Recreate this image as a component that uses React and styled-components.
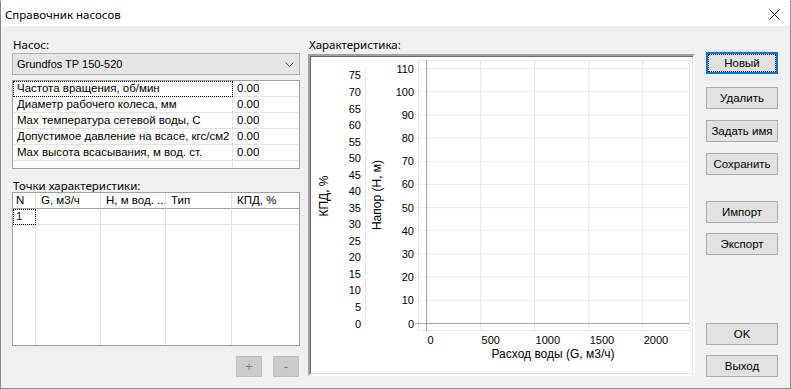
import React from 'react'
import styled, { createGlobalStyle } from 'styled-components'

const GlobalStyle = createGlobalStyle`
  html, body {
    margin: 0;
    padding: 0;
    background: #ffffff;
  }
  * {
    box-sizing: border-box;
  }
`

const uiFont = `"Noto Sans", "Liberation Sans", sans-serif`
const gridFont = `"Liberation Sans", Arial, sans-serif`

const Window = styled.div`
  width: 791px;
  height: 389px;
  border: 1px solid #8a8a8a;
  border-top-color: #ffffff;
  display: flex;
  flex-direction: column;
  background: #f0f0f0;
  overflow: hidden;
`

const TitleBar = styled.div`
  height: 25px;
  flex: 0 0 25px;
  background: #ffffff;
  display: flex;
  align-items: center;
  justify-content: space-between;
  padding: 0 10px 0 4px;
`

const Title = styled.div`
  font-family: ${uiFont};
  font-size: 11.5px;
  color: #000;
  margin-top: 1px;
`

const CloseIcon = styled.svg`
  width: 11px;
  height: 11px;
  margin-top: 2px;
`

const Body = styled.div`
  flex: 1 1 0;
  display: flex;
  padding: 11px 0 0 11px;
`

const LeftPanel = styled.div`
  width: 288px;
  display: flex;
  flex-direction: column;
`

const FieldLabel = styled.div`
  font-family: ${uiFont};
  font-size: 11.5px;
  line-height: 15px;
  height: ${(p) => p.$h || 15}px;
  color: #000;
  margin-top: ${(p) => p.$top || 0}px;
  padding-left: 1px;
`

const Combo = styled.div`
  margin-top: 1px;
  height: 22px;
  border: 1px solid #adadad;
  background: #e5e5e5;
  display: flex;
  align-items: center;
  justify-content: space-between;
  padding: 0 5px 0 4px;
  font-family: ${gridFont};
  font-size: 11px;
  color: #000;
`

const Chevron = styled.svg`
  width: 9px;
  height: 5px;
`

const PropGrid = styled.div`
  margin-top: 5px;
  height: 89px;
  border: 1px solid #a0a0a0;
  background: #ffffff;
  display: grid;
  grid-template-columns: 220px 1fr;
  grid-auto-rows: 16px;
  overflow: hidden;
`

const PropCell = styled.div`
  font-family: ${gridFont};
  font-size: 11.5px;
  line-height: 15px;
  height: 16px;
  padding-left: 4px;
  border-bottom: 1px solid #e2e2e2;
  border-right: ${(p) => (p.$value ? 'none' : '1px solid #e2e2e2')};
  color: #000;
  white-space: nowrap;
  overflow: hidden;
  outline: ${(p) => (p.$focus ? '1px dotted #000' : 'none')};
  outline-offset: -1px;
`

const PointsTable = styled.div`
  height: 154px;
  border: 1px solid #a0a0a0;
  background: #ffffff;
  display: grid;
  grid-template-columns: 23px 65px 65px 66px 1fr;
  grid-template-rows: 16px 16px 1fr;
`

const HeadCell = styled.div`
  font-family: ${gridFont};
  font-size: 11.5px;
  line-height: 15px;
  padding-left: ${(p) => (p.$first ? 3 : 5)}px;
  border-bottom: 1px solid #a0a0a0;
  border-right: ${(p) => (p.$last ? 'none' : '1px solid #e2e2e2')};
  color: #000;
  white-space: nowrap;
  overflow: hidden;
`

const RowCell = styled.div`
  font-family: ${gridFont};
  font-size: 11.5px;
  line-height: 15px;
  padding-left: 3px;
  border-bottom: ${(p) => (p.$filler ? 'none' : '1px solid #e2e2e2')};
  border-right: ${(p) => (p.$last ? 'none' : '1px solid #e2e2e2')};
  color: #1a0f3a;
  outline: ${(p) => (p.$focus ? '1px dotted #000' : 'none')};
  outline-offset: -1px;
`

const SmallButtons = styled.div`
  display: flex;
  justify-content: flex-end;
  gap: 11px;
  margin-top: 10px;
  padding-right: 1px;
`

const SmallButton = styled.div`
  width: 26px;
  height: 21px;
  background: #cccccc;
  border: 1px solid #bfbfbf;
  color: #7d7d8a;
  font-family: ${gridFont};
  font-size: 13px;
  display: flex;
  align-items: center;
  justify-content: center;
`

const ChartPanel = styled.div`
  width: 387px;
  margin-left: 8px;
  display: flex;
  flex-direction: column;
`

const ChartFrame = styled.div`
  margin-top: 2px;
  height: 322px;
  border-style: solid;
  border-width: 2px;
  border-color: #a0a0a0 #ffffff #ffffff #a0a0a0;
  box-shadow: inset 1px 1px 0 #696969, inset -1px -1px 0 #e3e3e3;
  background: #ffffff;
`

const ChartSvg = styled.svg`
  display: block;
  width: 383px;
  height: 318px;
  font-family: ${gridFont};
`

const ButtonColumn = styled.div`
  width: 72px;
  margin-left: 11px;
  display: flex;
  flex-direction: column;
  padding-top: 15px;
`

const DlgButton = styled.div`
  height: 22px;
  margin-top: ${(p) => p.$top}px;
  background: #e1e1e1;
  border: ${(p) => (p.$default ? '2px solid #0078d7' : '1px solid #adadad')};
  font-family: ${gridFont};
  font-size: 11.5px;
  color: #000;
  display: flex;
  align-items: center;
  justify-content: center;
  position: relative;
  &::after {
    content: '';
    display: ${(p) => (p.$default ? 'block' : 'none')};
    position: absolute;
    inset: 1px;
    outline: 1px dotted #000;
  }
`

const props = [
  'Частота вращения, об/мин',
  'Диаметр рабочего колеса, мм',
  'Max температура сетевой воды, С',
  'Допустимое давление на всасе, кгс/см2',
  'Max высота всасывания, м вод. ст.',
]

const columns = ['N', 'G, м3/ч', 'H, м вод. ...', 'Тип', 'КПД, %']

const buttons = [
  { label: 'Новый', top: 0, def: true },
  { label: 'Удалить', top: 13 },
  { label: 'Задать имя', top: 11 },
  { label: 'Сохранить', top: 11 },
  { label: 'Импорт', top: 26 },
  { label: 'Экспорт', top: 10 },
  { label: 'OK', top: 68 },
  { label: 'Выход', top: 10 },
]

const headY = (v) => 323.5 - v * 2.318
const kpdY = (v) => 323.5 - v * 3.307
const flowX = (g) => 426.5 + g * 0.1081

const Chart = () => {
  const heads = [0, 10, 20, 30, 40, 50, 60, 70, 80, 90, 100, 110]
  const kpds = Array.from({ length: 16 }, (_, i) => i * 5)
  const flows = [0, 500, 1000, 1500, 2000]
  return (
    <ChartSvg viewBox="310 56 383 318">
      <rect x="418.5" y="60.5" width="271" height="270" fill="none" stroke="#e6e6e6" />
      {heads.slice(1).map((v) => (
        <line key={'h' + v} x1="415" x2="689" y1={headY(v)} y2={headY(v)} stroke="#ebebeb" />
      ))}
      {flows.slice(1).map((g) => (
        <line key={'g' + g} x1={flowX(g)} x2={flowX(g)} y1="60" y2="331" stroke="#ebebeb" />
      ))}
      <line x1="415" x2="689" y1="323.5" y2="323.5" stroke="#a0a0a0" />
      <line x1="426.5" x2="426.5" y1="60" y2="331" stroke="#a0a0a0" />
      <line x1="365.5" x2="365.5" y1="68" y2="324" stroke="#e6e6e6" />
      <line x1="362" x2="366" y1="323.5" y2="323.5" stroke="#e6e6e6" />

      {heads.map((v) => (
        <text key={'ht' + v} x="414" y={headY(v) + 4} fontSize="11" textAnchor="end" fill="#000">
          {v}
        </text>
      ))}
      {kpds.map((v) => (
        <text key={'kt' + v} x="361" y={kpdY(v) + 4} fontSize="11" textAnchor="end" fill="#000">
          {v}
        </text>
      ))}
      {flows.map((g) => (
        <text key={'gt' + g} x={flowX(g) + 1} y="344" fontSize="11" fill="#000">
          {g}
        </text>
      ))}
      <text x="553" y="358" fontSize="12" textAnchor="middle" fill="#000">
        Расход воды (G, м3/ч)
      </text>
      <text transform="translate(328 196) rotate(-90)" fontSize="12" textAnchor="middle" fill="#000">
        КПД, %
      </text>
      <text transform="translate(381 195) rotate(-90)" fontSize="12" textAnchor="middle" fill="#000">
        Напор (H, м)
      </text>
    </ChartSvg>
  )
}

const App = () => {
  return (
    <>
      <GlobalStyle />
      <Window>
        <TitleBar>
          <Title>Справочник насосов</Title>
          <CloseIcon viewBox="0 0 11 11">
            <path d="M0.5 0.5 L10.5 10.5 M10.5 0.5 L0.5 10.5" stroke="#000" strokeWidth="1" />
          </CloseIcon>
        </TitleBar>
        <Body>
          <LeftPanel>
            <FieldLabel>Насос:</FieldLabel>
            <Combo>
              <span>Grundfos TP 150-520</span>
              <Chevron viewBox="0 0 9 5">
                <path d="M0.5 0.5 L4.5 4.5 L8.5 0.5" fill="none" stroke="#505050" />
              </Chevron>
            </Combo>
            <PropGrid>
              {props.map((name, i) => (
                <React.Fragment key={name}>
                  <PropCell $focus={i === 0}>{name}</PropCell>
                  <PropCell $value>0.00</PropCell>
                </React.Fragment>
              ))}
              <PropCell />
              <PropCell $value />
            </PropGrid>
            <FieldLabel $top={9} $h={14}>Точки характеристики:</FieldLabel>
            <PointsTable>
              {columns.map((c, i) => (
                <HeadCell key={c} $first={i === 0} $last={i === columns.length - 1}>
                  {c}
                </HeadCell>
              ))}
              {columns.map((c, i) => (
                <RowCell key={'r' + c} $focus={i === 0} $last={i === columns.length - 1}>
                  {i === 0 ? '1' : ''}
                </RowCell>
              ))}
              {columns.map((c, i) => (
                <RowCell key={'f' + c} $filler $last={i === columns.length - 1} />
              ))}
            </PointsTable>
            <SmallButtons>
              <SmallButton>+</SmallButton>
              <SmallButton>-</SmallButton>
            </SmallButtons>
          </LeftPanel>
          <ChartPanel>
            <FieldLabel>Характеристика:</FieldLabel>
            <ChartFrame>
              <Chart />
            </ChartFrame>
          </ChartPanel>
          <ButtonColumn>
            {buttons.map((b) => (
              <DlgButton key={b.label} $top={b.top} $default={b.def}>
                {b.label}
              </DlgButton>
            ))}
          </ButtonColumn>
        </Body>
      </Window>
    </>
  )
}

export default App
